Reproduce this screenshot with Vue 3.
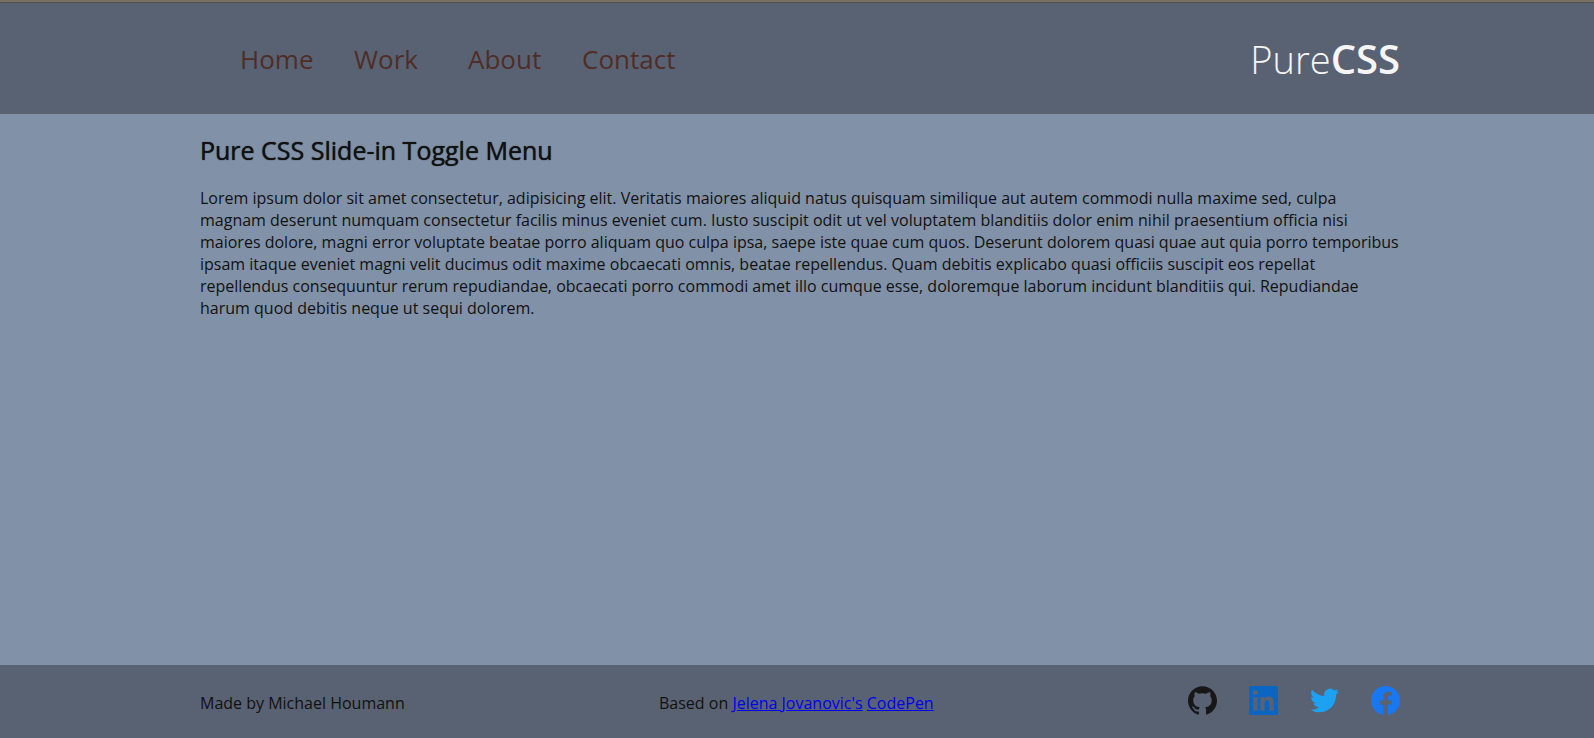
<script setup>
const navItems = ['Home', 'Work', 'About', 'Contact']

const socials = [
  {
    name: 'GitHub',
    color: '#181717',
    path: 'M12 .297c-6.63 0-12 5.373-12 12 0 5.303 3.438 9.8 8.205 11.385.6.113.82-.258.82-.577 0-.285-.01-1.04-.015-2.04-3.338.724-4.042-1.61-4.042-1.61C4.422 18.07 3.633 17.7 3.633 17.7c-1.087-.744.084-.729.084-.729 1.205.084 1.838 1.236 1.838 1.236 1.07 1.835 2.809 1.305 3.495.998.108-.776.417-1.305.76-1.605-2.665-.3-5.466-1.332-5.466-5.93 0-1.31.465-2.38 1.235-3.22-.135-.303-.54-1.523.105-3.176 0 0 1.005-.322 3.3 1.23.96-.267 1.98-.399 3-.405 1.02.006 2.04.138 3 .405 2.28-1.552 3.285-1.23 3.285-1.23.645 1.653.24 2.873.12 3.176.765.84 1.23 1.91 1.23 3.22 0 4.61-2.805 5.625-5.475 5.92.42.36.81 1.096.81 2.22 0 1.606-.015 2.896-.015 3.286 0 .315.21.69.825.57C20.565 22.092 24 17.592 24 12.297c0-6.627-5.373-12-12-12'
  },
  {
    name: 'LinkedIn',
    color: '#0a66c2',
    path: 'M20.447 20.452h-3.554v-5.569c0-1.328-.027-3.037-1.852-3.037-1.853 0-2.136 1.445-2.136 2.939v5.667H9.351V9h3.414v1.561h.046c.477-.9 1.637-1.85 3.37-1.85 3.601 0 4.267 2.37 4.267 5.455v6.286zM5.337 7.433c-1.144 0-2.063-.926-2.063-2.065 0-1.138.92-2.063 2.063-2.063 1.14 0 2.064.925 2.064 2.063 0 1.139-.925 2.065-2.064 2.065zm1.782 13.019H3.555V9h3.564v11.452zM22.225 0H1.771C.792 0 0 .774 0 1.729v20.542C0 23.227.792 24 1.771 24h20.451C23.2 24 24 23.227 24 22.271V1.729C24 .774 23.2 0 22.222 0h.003z'
  },
  {
    name: 'Twitter',
    color: '#1da1f2',
    path: 'M23.953 4.57a10 10 0 01-2.825.775 4.958 4.958 0 002.163-2.723c-.951.555-2.005.959-3.127 1.184a4.92 4.92 0 00-8.384 4.482C7.69 8.095 4.067 6.13 1.64 3.162a4.822 4.822 0 00-.666 2.475c0 1.71.87 3.213 2.188 4.096a4.904 4.904 0 01-2.228-.616v.06a4.923 4.923 0 003.946 4.827 4.996 4.996 0 01-2.212.085 4.936 4.936 0 004.604 3.417 9.867 9.867 0 01-6.102 2.105c-.39 0-.779-.023-1.17-.067a13.995 13.995 0 007.557 2.209c9.053 0 13.998-7.496 13.998-13.985 0-.21 0-.42-.015-.63A9.935 9.935 0 0024 4.59z'
  },
  {
    name: 'Facebook',
    color: '#1877f2',
    path: 'M24 12.073c0-6.627-5.373-12-12-12s-12 5.373-12 12c0 5.99 4.388 10.954 10.125 11.854v-8.385H7.078v-3.47h3.047V9.43c0-3.007 1.792-4.669 4.533-4.669 1.312 0 2.686.235 2.686.235v2.953H15.83c-1.491 0-1.956.925-1.956 1.874v2.25h3.328l-.532 3.47h-2.796v8.385C19.612 23.027 24 18.062 24 12.073z'
  }
]
</script>

<template>
  <div class="page">
    <header class="bar header">
      <div class="container header-row">
        <nav aria-label="Main">
          <ul class="menu">
            <li v-for="item in navItems" :key="item">
              <a :href="'#' + item.toLowerCase()">{{ item }}</a>
            </li>
          </ul>
        </nav>
        <div class="logo">Pure<span>CSS</span></div>
      </div>
    </header>

    <main class="main">
      <div class="container">
        <h1>Pure CSS Slide-in Toggle Menu</h1>
        <p>
          Lorem ipsum dolor sit amet consectetur, adipisicing elit. Veritatis maiores aliquid natus
          quisquam similique aut autem commodi nulla maxime sed, culpa magnam deserunt numquam
          consectetur facilis minus eveniet cum. Iusto suscipit odit ut vel voluptatem blanditiis
          dolor enim nihil praesentium officia nisi maiores dolore, magni error voluptate beatae
          porro aliquam quo culpa ipsa, saepe iste quae cum quos. Deserunt dolorem quasi quae aut
          quia porro temporibus ipsam itaque eveniet magni velit ducimus odit maxime obcaecati
          omnis, beatae repellendus. Quam debitis explicabo quasi officiis suscipit eos repellat
          repellendus consequuntur rerum repudiandae, obcaecati porro commodi amet illo cumque esse,
          doloremque laborum incidunt blanditiis qui. Repudiandae harum quod debitis neque ut sequi
          dolorem.
        </p>
      </div>
    </main>

    <footer class="bar footer">
      <div class="container footer-row">
        <div>Made by Michael Houmann</div>
        <div>
          Based on <a href="#jelena">Jelena Jovanovic's</a> <a href="#codepen">CodePen</a>
        </div>
        <div class="socials">
          <a v-for="s in socials" :key="s.name" :href="'#' + s.name" :aria-label="s.name">
            <svg viewBox="0 0 24 24" :fill="s.color" aria-hidden="true"><path :d="s.path" /></svg>
          </a>
        </div>
      </div>
    </footer>
  </div>
</template>

<style>
body {
  margin: 0;
}
</style>

<style scoped>
.page {
  display: flex;
  flex-direction: column;
  min-height: 100vh;
  box-sizing: border-box;
  border-top: 2px solid #777165;
  background: #8191a8;
  color: #111;
  font: 16px/22px "Open Sans", sans-serif;
}

.bar,
.main {
  padding-left: 6px;
}

.bar {
  background: #596272;
}

.container {
  max-width: 1200px;
  margin: 0 auto;
}

.header {
  border-top: 1px solid #5b4f49;
}

.header-row {
  display: flex;
  align-items: center;
  justify-content: space-between;
  min-height: 111px;
}

.menu {
  display: grid;
  grid-template-columns: repeat(4, 114px);
  margin: 0;
  padding: 0 0 0 40px;
  list-style: none;
  font-size: 26px;
  line-height: 36px;
}

.menu a {
  color: #4f2d27;
  text-decoration: none;
}

.logo {
  color: #f5f5f5;
  font-size: 38px;
  line-height: 55px;
  font-weight: 300;
}

.logo span {
  font-size: 40px;
  font-weight: 600;
}

.main {
  flex: 1;
}

h1 {
  margin: 20px 0;
  font-size: 25px;
  line-height: 33px;
  font-weight: 500;
  text-shadow: 0 0 1px #111;
}

p {
  margin: 0;
}

.footer-row {
  display: flex;
  align-items: center;
  justify-content: space-between;
  min-height: 71px;
  padding-top: 2px;
}

.footer-row a {
  color: #0000ee;
}

.socials {
  display: flex;
  gap: 32px;
  padding-bottom: 4px;
}

.socials svg {
  display: block;
  width: 29px;
  height: 29px;
}
</style>
